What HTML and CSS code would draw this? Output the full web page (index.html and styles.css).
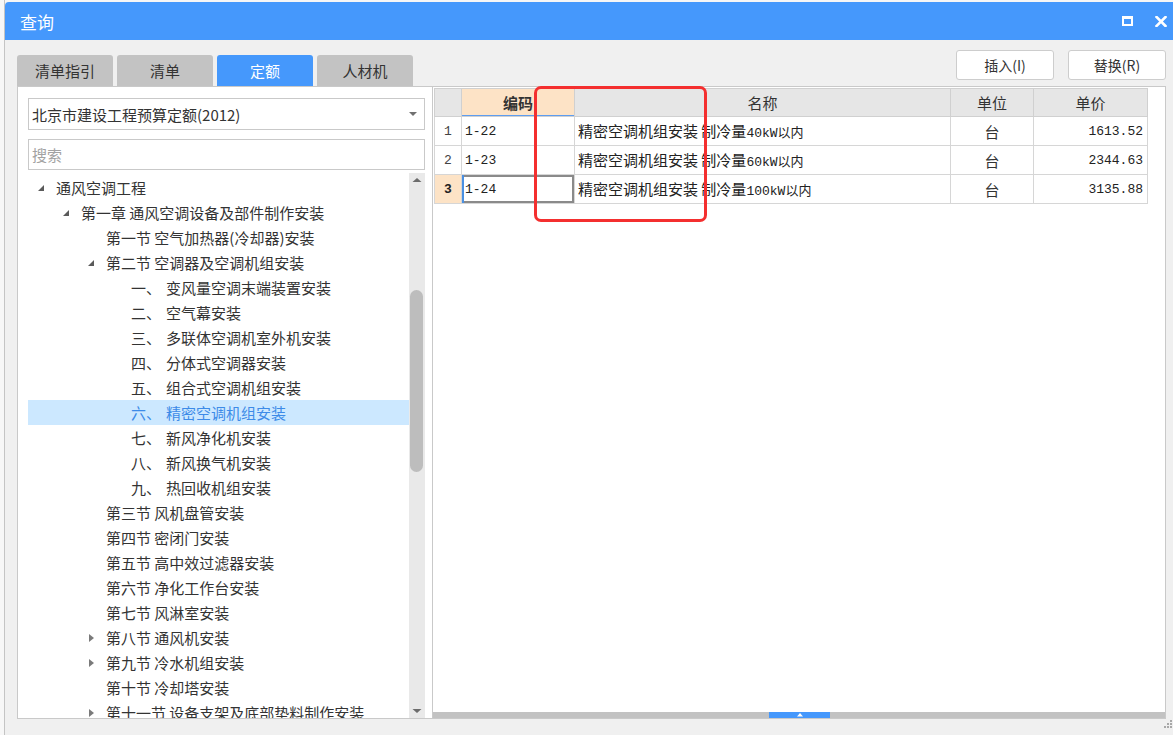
FILE: index.html
```html
<!DOCTYPE html>
<html lang="zh-CN">
<head>
    <meta charset="UTF-8">
    <title>查询</title>
    <link rel="stylesheet" href="styles.css">
</head>
<body>
    <div class="side-strip"></div>

    <div class="dialog">
        <div class="titlebar">
            <span class="title">查询</span>
            <div class="win-buttons">
                <span class="win-max"></span>
                <svg class="win-close" width="12" height="11" viewBox="0 0 12 11">
                    <path d="M1.5 1 L10.5 10 M10.5 1 L1.5 10" stroke="#fff" stroke-width="2.6" stroke-linecap="square"/>
                </svg>
            </div>
        </div>

        <div class="dialog-body">
            <div class="toolbar">
                <div class="tabs">
                    <div class="tab">清单指引</div>
                    <div class="tab">清单</div>
                    <div class="tab active">定额</div>
                    <div class="tab">人材机</div>
                </div>
                <div class="actions">
                    <button class="btn">插入(I)</button>
                    <button class="btn">替换(R)</button>
                </div>
            </div>

            <div class="main">
                <div class="left-panel">
                    <div class="select">
                        <span>北京市建设工程预算定额(2012)</span>
                        <svg width="8" height="4" viewBox="0 0 8 4"><polygon points="0,0 8,0 4,4" fill="#707070"/></svg>
                    </div>
                    <div class="search">搜索</div>

                    <div class="tree">
                        <div class="tree-list">
                            <div class="node lv0"><span class="caret"><svg width="8" height="8"><polygon points="7,1 7,7 1,7" fill="#5a5a5a"/></svg></span>通风空调工程</div>
                            <div class="node lv1"><span class="caret"><svg width="8" height="8"><polygon points="7,1 7,7 1,7" fill="#5a5a5a"/></svg></span>第一章 通风空调设备及部件制作安装</div>
                            <div class="node lv2"><span class="caret"></span>第一节 空气加热器(冷却器)安装</div>
                            <div class="node lv2"><span class="caret"><svg width="8" height="8"><polygon points="7,1 7,7 1,7" fill="#5a5a5a"/></svg></span>第二节 空调器及空调机组安装</div>
                            <div class="node lv3"><span class="ord">一、</span>变风量空调末端装置安装</div>
                            <div class="node lv3"><span class="ord">二、</span>空气幕安装</div>
                            <div class="node lv3"><span class="ord">三、</span>多联体空调机室外机安装</div>
                            <div class="node lv3"><span class="ord">四、</span>分体式空调器安装</div>
                            <div class="node lv3"><span class="ord">五、</span>组合式空调机组安装</div>
                            <div class="node lv3 selected"><span class="ord">六、</span>精密空调机组安装</div>
                            <div class="node lv3"><span class="ord">七、</span>新风净化机安装</div>
                            <div class="node lv3"><span class="ord">八、</span>新风换气机安装</div>
                            <div class="node lv3"><span class="ord">九、</span>热回收机组安装</div>
                            <div class="node lv2"><span class="caret"></span>第三节 风机盘管安装</div>
                            <div class="node lv2"><span class="caret"></span>第四节 密闭门安装</div>
                            <div class="node lv2"><span class="caret"></span>第五节 高中效过滤器安装</div>
                            <div class="node lv2"><span class="caret"></span>第六节 净化工作台安装</div>
                            <div class="node lv2"><span class="caret"></span>第七节 风淋室安装</div>
                            <div class="node lv2"><span class="caret"><svg width="8" height="10"><polygon points="2,1 7,5 2,9" fill="#7a7a7a"/></svg></span>第八节 通风机安装</div>
                            <div class="node lv2"><span class="caret"><svg width="8" height="10"><polygon points="2,1 7,5 2,9" fill="#7a7a7a"/></svg></span>第九节 冷水机组安装</div>
                            <div class="node lv2"><span class="caret"></span>第十节 冷却塔安装</div>
                            <div class="node lv2"><span class="caret"><svg width="8" height="10"><polygon points="2,1 7,5 2,9" fill="#7a7a7a"/></svg></span>第十一节 设备支架及底部垫料制作安装</div>
                        </div>
                        <div class="vscroll">
                            <svg class="arrow" width="16" height="12" viewBox="0 0 16 12"><polygon points="3.5,9 12.5,9 8,5" fill="#6c6c6c"/></svg>
                            <div class="thumb"></div>
                            <div class="fill"></div>
                            <svg class="arrow" width="16" height="12" viewBox="0 0 16 12"><polygon points="3.5,3 12.5,3 8,7" fill="#6c6c6c"/></svg>
                        </div>
                    </div>
                </div>

                <div class="right-panel">
                    <div class="grid-wrap">
                        <table class="grid">
                            <colgroup>
                                <col class="c-no"><col class="c-code"><col class="c-name"><col class="c-unit"><col class="c-price">
                            </colgroup>
                            <thead>
                                <tr>
                                    <th></th>
                                    <th class="active-col">编码</th>
                                    <th>名称</th>
                                    <th>单位</th>
                                    <th>单价</th>
                                </tr>
                            </thead>
                            <tbody>
                                <tr>
                                    <td class="no">1</td>
                                    <td class="code">1-22</td>
                                    <td class="name">精密空调机组安装 制冷量<span class="small">40kW以内</span></td>
                                    <td class="unit">台</td>
                                    <td class="price">1613.52</td>
                                </tr>
                                <tr>
                                    <td class="no">2</td>
                                    <td class="code">1-23</td>
                                    <td class="name">精密空调机组安装 制冷量<span class="small">60kW以内</span></td>
                                    <td class="unit">台</td>
                                    <td class="price">2344.63</td>
                                </tr>
                                <tr>
                                    <td class="no current">3</td>
                                    <td class="code focused">1-24</td>
                                    <td class="name">精密空调机组安装 制冷量<span class="small">100kW以内</span></td>
                                    <td class="unit">台</td>
                                    <td class="price">3135.88</td>
                                </tr>
                            </tbody>
                        </table>
                    </div>
                    <div class="splitter">
                        <div class="splitter-handle">
                            <svg width="8" height="5" viewBox="0 0 8 5"><polygon points="1,4.5 7,4.5 4,1" fill="#fff"/></svg>
                        </div>
                    </div>
                    <div class="mark"></div>
                </div>
            </div>
        </div>

        <div class="statusbar">
            <svg width="9" height="11" viewBox="0 0 9 11">
                <rect x="6" y="1" width="2" height="2" fill="#a8a8a8"/>
                <rect x="3" y="4" width="2" height="2" fill="#a8a8a8"/>
                <rect x="6" y="4" width="2" height="2" fill="#a8a8a8"/>
                <rect x="0" y="7" width="2" height="2" fill="#a8a8a8"/>
                <rect x="3" y="7" width="2" height="2" fill="#a8a8a8"/>
                <rect x="6" y="7" width="2" height="2" fill="#a8a8a8"/>
            </svg>
        </div>
    </div>
</body>
</html>
```

FILE: styles.css
```css
body {
    margin: 0;
    width: 1173px;
    height: 735px;
    overflow: hidden;
    display: flex;
    background: #f6f6f6;
    font-family: "Noto Sans CJK SC", "Noto Sans", sans-serif;
    color: #333;
}

.side-strip {
    width: 4px;
    border-right: 1px solid #c4c4c4;
    background: #f7f7f7;
}

.dialog {
    flex: 1;
    margin-top: 2px;
    display: flex;
    flex-direction: column;
    background: #f0f0f0;
}

.titlebar {
    height: 38px;
    flex: none;
    background: #4598fc;
    border-radius: 4px 0 0 0;
    display: flex;
    align-items: center;
    justify-content: space-between;
    padding: 0 6px 0 15px;
    color: #fff;
    font-size: 17px;
}

.win-buttons {
    display: flex;
    align-items: center;
    gap: 22px;
}

.win-max {
    width: 11px;
    height: 10px;
    box-sizing: border-box;
    border: 2px solid #fff;
    border-top-width: 3px;
}

.dialog-body {
    display: flex;
    flex-direction: column;
    padding: 10px 7px 0 12px;
}

.toolbar {
    display: flex;
    justify-content: space-between;
    align-items: flex-end;
}

.tabs {
    display: flex;
    gap: 4px;
}

.tab {
    width: 96px;
    height: 31px;
    line-height: 31px;
    text-align: center;
    background: #c3c3c3;
    border-radius: 3px 3px 0 0;
    font-size: 15px;
    color: #333;
}

.tab.active {
    background: #4598fc;
    color: #fff;
}

.actions {
    display: flex;
    gap: 14px;
    margin-bottom: 6px;
}

.btn {
    width: 98px;
    height: 30px;
    box-sizing: border-box;
    border: 1px solid #cdcdcd;
    border-radius: 3px;
    background: #fff;
    font-family: inherit;
    font-size: 14px;
    color: #333;
    padding: 0;
}

.main {
    display: flex;
    height: 633px;
}

.left-panel {
    width: 416px;
    box-sizing: border-box;
    background: #fff;
    border: 1px solid #c9c9c9;
    padding: 11px 7px 0 10px;
    display: flex;
    flex-direction: column;
}

.select {
    height: 32px;
    flex: none;
    box-sizing: border-box;
    border: 1px solid #c9c9c9;
    display: flex;
    align-items: center;
    justify-content: space-between;
    padding: 0 7px 0 3px;
    font-size: 15px;
}

.search {
    margin-top: 9px;
    height: 31px;
    flex: none;
    box-sizing: border-box;
    border: 1px solid #c9c9c9;
    padding-left: 3px;
    line-height: 29px;
    font-size: 15px;
    color: #a2a2a2;
}

.tree {
    margin-top: 3px;
    flex: 1;
    min-height: 0;
    display: flex;
    overflow: hidden;
}

.tree-list {
    flex: 1;
    padding-top: 2px;
    overflow: hidden;
}

.node {
    height: 25px;
    display: flex;
    align-items: center;
    font-size: 15px;
    white-space: nowrap;
}

.node.lv0 { padding-left: 7px; }
.node.lv1 { padding-left: 32px; }
.node.lv2 { padding-left: 57px; }
.node.lv3 { padding-left: 103px; }

.caret {
    width: 19px;
    flex: none;
    padding-left: 2px;
    display: flex;
    align-items: center;
}

.ord {
    width: 35px;
    flex: none;
}

.node.selected {
    background: #cce8ff;
    color: #3d8be8;
}

.vscroll {
    width: 16px;
    flex: none;
    background: #e9e9e9;
    display: flex;
    flex-direction: column;
}

.vscroll .arrow {
    display: block;
    flex: none;
}

.vscroll .thumb {
    margin: 105px 0 0 1px;
    width: 13px;
    height: 182px;
    border-radius: 7px;
    background: #bdbdbd;
}

.vscroll .fill {
    flex: 1;
}

.right-panel {
    flex: 1;
    position: relative;
    background: #fff;
    border: 1px solid #c9c9c9;
    border-left: none;
    display: flex;
    flex-direction: column;
}

.grid-wrap {
    flex: 1;
    padding: 1px 0 0 1px;
}

.grid {
    border-collapse: collapse;
    table-layout: fixed;
    width: 713px;
}

.c-no { width: 27px; }
.c-code { width: 113px; }
.c-name { width: 376px; }
.c-unit { width: 83px; }
.c-price { width: 114px; }

.grid th {
    height: 27px;
    padding: 0;
    background: #e6e6e6;
    border: 1px solid #d0d0d0;
    font-weight: normal;
    font-size: 15px;
    color: #333;
}

.grid th.active-col {
    background: #fde3c6;
    font-weight: bold;
    box-shadow: inset 0 -1px 0 #5d9df0;
}

.grid td {
    height: 28px;
    padding: 0;
    border: 1px solid #d6d6d6;
    font-size: 15px;
    line-height: 1;
    white-space: nowrap;
    overflow: hidden;
}

.grid td.no {
    text-align: center;
    font-family: "Liberation Mono", monospace;
    font-size: 13px;
    color: #444;
}

.grid td.no.current {
    background: #fde3c6;
    font-weight: bold;
    color: #222;
}

.grid td.code {
    padding-left: 3px;
    font-family: "Liberation Mono", monospace;
    font-size: 13px;
    color: #222;
}

.grid td.code.focused {
    box-shadow: inset 2px 0 0 #4a90e2, inset 0 0 0 2px #8a8a8a;
}

.grid td.name {
    padding-left: 3px;
    color: #222;
}

.small {
    font-family: "Liberation Mono", "Noto Sans CJK SC", monospace;
    font-size: 13px;
}

.grid td.unit {
    text-align: center;
}

.grid td.price {
    text-align: right;
    padding-right: 4px;
    font-family: "Liberation Mono", monospace;
    font-size: 13px;
    color: #222;
}

.splitter {
    height: 6px;
    flex: none;
    background: #c2c2c2;
    display: flex;
}

.splitter-handle {
    margin-left: 336px;
    width: 61px;
    background: #4598fc;
    display: flex;
    justify-content: center;
    align-items: flex-start;
}

.mark {
    position: absolute;
    left: 101px;
    top: -1px;
    width: 173px;
    height: 136px;
    box-sizing: border-box;
    border: 3px solid #f42f2f;
    border-radius: 7px;
}

.statusbar {
    height: 16px;
    display: flex;
    justify-content: flex-end;
    align-items: flex-start;
}
```
